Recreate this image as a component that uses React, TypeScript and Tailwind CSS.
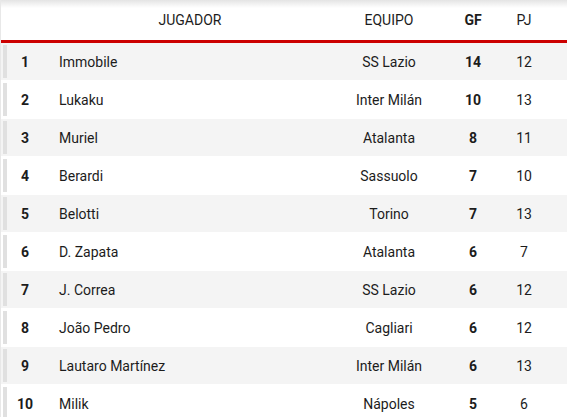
const players = [
  { pos: 1, name: "Immobile", team: "SS Lazio", gf: 14, pj: 12 },
  { pos: 2, name: "Lukaku", team: "Inter Milán", gf: 10, pj: 13 },
  { pos: 3, name: "Muriel", team: "Atalanta", gf: 8, pj: 11 },
  { pos: 4, name: "Berardi", team: "Sassuolo", gf: 7, pj: 10 },
  { pos: 5, name: "Belotti", team: "Torino", gf: 7, pj: 13 },
  { pos: 6, name: "D. Zapata", team: "Atalanta", gf: 6, pj: 7 },
  { pos: 7, name: "J. Correa", team: "SS Lazio", gf: 6, pj: 12 },
  { pos: 8, name: "João Pedro", team: "Cagliari", gf: 6, pj: 12 },
  { pos: 9, name: "Lautaro Martínez", team: "Inter Milán", gf: 6, pj: 13 },
  { pos: 10, name: "Milik", team: "Nápoles", gf: 5, pj: 6 },
];

const cols = "grid grid-cols-[48px_282px_116px_52px_50px_1fr]";

export default function App() {
  return (
    <div className="w-[567px] h-[417px] overflow-hidden bg-white border-l border-[#e8e8e8] font-['Roboto',sans-serif] text-[14px] text-[#1c1c1c]">
      <div className={`${cols} h-[40px] items-center bg-[linear-gradient(to_bottom,#e4e4e4,#ffffff_8px)]`}>
        <div />
        <div className="text-center">JUGADOR</div>
        <div className="text-center">EQUIPO</div>
        <div className="text-center font-bold">GF</div>
        <div className="text-center">PJ</div>
        <div />
      </div>
      <div className="h-[3px] bg-[#cc0000]" />
      {players.map((p, i) => (
        <div
          key={p.pos}
          className={`${cols} h-[38px] pt-[1px] border-b border-white ${i % 2 === 0 ? "bg-[#f4f4f4]" : "bg-white"}`}
        >
          <div className="flex items-stretch">
            <div className="ml-[2px] mt-[1px] mb-[2px] w-[4px] bg-[#e0e0e0]" />
            <div className="w-[36px] flex items-center justify-center font-bold">{p.pos}</div>
          </div>
          <div className="flex items-center pl-[10px]">{p.name}</div>
          <div className="flex items-center justify-center">{p.team}</div>
          <div className="flex items-center justify-center font-bold">{p.gf}</div>
          <div className="flex items-center justify-center">{p.pj}</div>
          <div />
        </div>
      ))}
    </div>
  );
}
